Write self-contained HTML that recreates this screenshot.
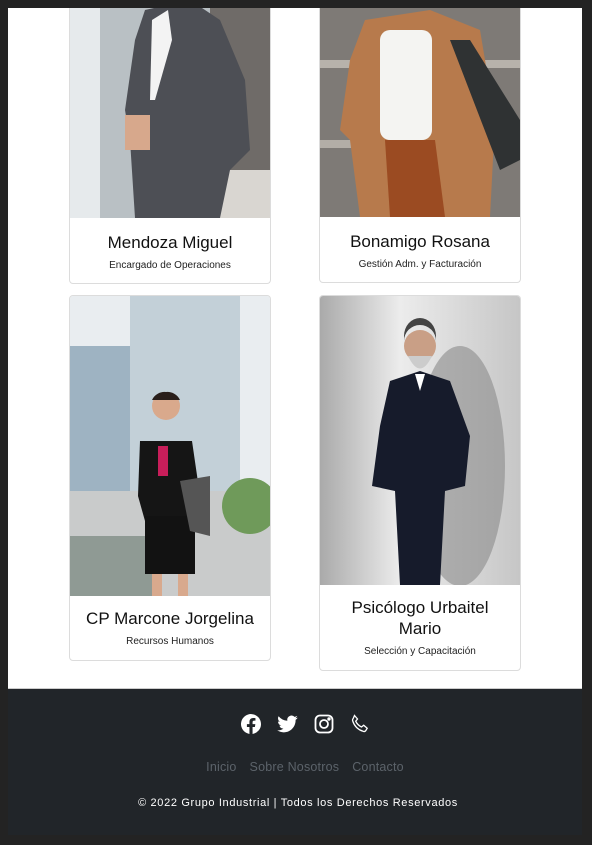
<!DOCTYPE html>
<html><head><meta charset="utf-8"><style>
*{margin:0;padding:0;box-sizing:border-box}
body{width:592px;height:845px;background:#232323;position:relative;overflow:hidden;font-family:"Liberation Sans",sans-serif}
.main{position:absolute;left:8px;top:8px;width:574px;height:680px;background:#fff}
.card{position:absolute;border:1px solid #dcdcdc;border-radius:4px;background:#fff;overflow:hidden;text-align:center}
.card svg{display:block}
.t{font-size:17px;color:#111;line-height:21px}
.s{font-size:10px;color:#222;margin-top:7px}
.foot{position:absolute;left:8px;top:688px;width:574px;height:147px;background:#212529;border-top:1px solid #ccc}
.links{position:absolute;top:71px;left:10px;width:100%;text-align:center;font-size:12.5px;color:#5c636a;letter-spacing:.2px}
.links span{margin:0 6.5px}
.copy{position:absolute;top:108px;left:3px;width:100%;text-align:center;font-size:11px;color:#fff;letter-spacing:.65px}
</style></head><body>
<div class="main"></div>

<div class="card" style="left:69px;top:8px;width:202px;height:276px;border-top:none;border-radius:0 0 4px 4px">
<svg width="202" height="210" viewBox="0 8 202 210"><rect width="202" height="218" fill="#b9c0c4"/><rect x="0" width="30" height="218" fill="#e6eaec"/><rect x="140" y="0" width="62" height="218" fill="#6f6b68"/><rect x="140" y="170" width="62" height="48" fill="#d9d6d1"/><path d="M75 10 L120 0 L150 20 L175 80 L180 150 L160 170 L150 218 L65 218 L60 140 L55 110 L65 40Z" fill="#4d4f55"/><path d="M82 20 L98 10 L102 40 L85 100 L80 100Z" fill="#f3f3f3"/><rect x="55" y="115" width="25" height="35" fill="#d7a88c"/></svg>
<div style="padding-top:14px" class="t">Mendoza Miguel</div><div class="s">Encargado de Operaciones</div></div>

<div class="card" style="left:319px;top:8px;width:202px;height:275px;border-top:none;border-radius:0 0 4px 4px">
<svg width="202" height="209" viewBox="0 8 202 209"><rect width="202" height="217" fill="#7e7a76"/><rect y="60" width="202" height="8" fill="#b7b2ab"/><rect y="140" width="202" height="8" fill="#b3aea7"/><path d="M45 20 L110 10 L160 30 L175 120 L170 217 L40 217 L30 140 L20 130 L30 60Z" fill="#b77a4c"/><rect x="60" y="30" width="52" height="110" rx="10" fill="#f4f4f2"/><path d="M65 140 L115 140 L125 217 L70 217Z" fill="#9b4b22"/><path d="M130 40 L150 40 L200 120 L200 160 L180 170Z" fill="#2f3233"/></svg>
<div style="padding-top:14px" class="t">Bonamigo Rosana</div><div class="s">Gestión Adm. y Facturación</div></div>

<div class="card" style="left:69px;top:295px;width:202px;height:366px">
<svg width="200" height="300" viewBox="0 0 200 300"><rect width="200" height="300" fill="#e9edf0"/><rect x="0" y="50" width="80" height="150" fill="#9eb3c2"/><rect x="60" y="0" width="110" height="200" fill="#c3d0d8"/><rect x="0" y="195" width="200" height="105" fill="#c9cbcb"/><rect x="0" y="240" width="90" height="60" fill="#8f9a94"/><circle cx="180" cy="210" r="28" fill="#6f9a5a"/><circle cx="96" cy="110" r="14" fill="#d9a98c"/><path d="M96 96 a14 14 0 0 1 14 8 L82 104 a14 14 0 0 1 14 -8Z" fill="#2a1f1b"/><path d="M70 145 L122 145 L130 200 L120 225 L75 225 L68 200Z" fill="#151515"/><rect x="75" y="220" width="50" height="58" fill="#121212"/><rect x="88" y="150" width="10" height="30" fill="#c81e5a"/><path d="M110 185 L140 180 L140 240 L120 235Z" fill="#555"/><rect x="82" y="278" width="10" height="22" fill="#d8a98d"/><rect x="108" y="278" width="10" height="22" fill="#d8a98d"/></svg>
<div style="padding-top:12px" class="t">CP Marcone Jorgelina</div><div class="s">Recursos Humanos</div></div>

<div class="card" style="left:319px;top:295px;width:202px;height:376px">
<svg width="200" height="289" viewBox="0 0 200 289"><defs><linearGradient id="g" x1="0" x2="1"><stop offset="0" stop-color="#aaa"/><stop offset=".4" stop-color="#ececec"/><stop offset="1" stop-color="#c6c6c6"/></linearGradient></defs><rect width="200" height="289" fill="url(#g)"/><ellipse cx="140" cy="170" rx="45" ry="120" fill="#8b8b8b" opacity=".6"/><circle cx="100" cy="50" r="16" fill="#c99f86"/><path d="M84 45 a16 16 0 0 1 32 0 L116 40 a16 18 0 0 0 -32 0Z" fill="#444"/><path d="M88 60 Q100 85 112 60Z" fill="#ccc"/><path d="M70 85 L100 75 L130 85 L150 140 L145 190 L125 195 L120 289 L80 289 L75 195 L52 190 L60 130Z" fill="#161b2b"/><path d="M95 78 L105 78 L100 95Z" fill="#fff"/></svg>
<div style="padding-top:12px" class="t">Psicólogo Urbaitel<br>Mario</div><div class="s">Selección y Capacitación</div></div>

<div class="foot">
<svg style="position:absolute;left:233px;top:25px" width="20" height="20" viewBox="0 0 16 16" fill="#fff"><path d="M16 8.05A8 8 0 1 0 6.75 15.95V10.35H4.72V8.05h2.030V6.28c0-2 1.2-3.12 3.02-3.12.87 0 1.8.16 1.8.16v1.97h-1.01c-1 0-1.31.62-1.31 1.25v1.51h2.22l-.35 2.3H9.25v5.6A8 8 0 0 0 16 8.05z"/></svg>
<svg style="position:absolute;left:269px;top:26px" width="21" height="18" viewBox="0 0 16 14" fill="#fff"><path d="M5 13.5c6 0 9.3-5 9.3-9.3v-.4A6.7 6.7 0 0 0 16 2a6.5 6.5 0 0 1-1.9.5A3.3 3.3 0 0 0 15.6.7a6.6 6.6 0 0 1-2.1.8A3.3 3.3 0 0 0 7.9 4.5 9.3 9.3 0 0 1 1.1 1a3.3 3.3 0 0 0 1 4.4 3.3 3.3 0 0 1-1.5-.4 3.3 3.3 0 0 0 2.6 3.2 3.3 3.3 0 0 1-1.5.1 3.3 3.3 0 0 0 3.1 2.3A6.6 6.6 0 0 1 0 11.9a9.3 9.3 0 0 0 5 1.6"/></svg>
<svg style="position:absolute;left:306px;top:25px" width="20" height="20" viewBox="0 0 20 20" fill="none" stroke="#fff" stroke-width="1.8"><rect x="1.5" y="1.5" width="17" height="17" rx="4.5"/><circle cx="10" cy="10" r="4"/><circle cx="15" cy="5" r=".8" fill="#fff"/></svg>
<svg style="position:absolute;left:342px;top:25px" width="20" height="20" viewBox="0 0 20 20" fill="none" stroke="#fff" stroke-width="1.3"><path d="M4.5 1.5l3 3.5-1.8 2.2c1.2 2.6 3.2 4.6 5.8 5.8l2.2-1.8 3.5 3-1.5 2.5c-.6.8-1.7 1-2.6.6C7.8 15.6 4.4 12.2 2.7 6.9c-.3-.9 0-2 .6-2.6z"/></svg>
<div class="links"><span>Inicio</span><span>Sobre Nosotros</span><span>Contacto</span></div>
<div class="copy">© 2022 Grupo Industrial | Todos los Derechos Reservados</div>
</div>
</body></html>
